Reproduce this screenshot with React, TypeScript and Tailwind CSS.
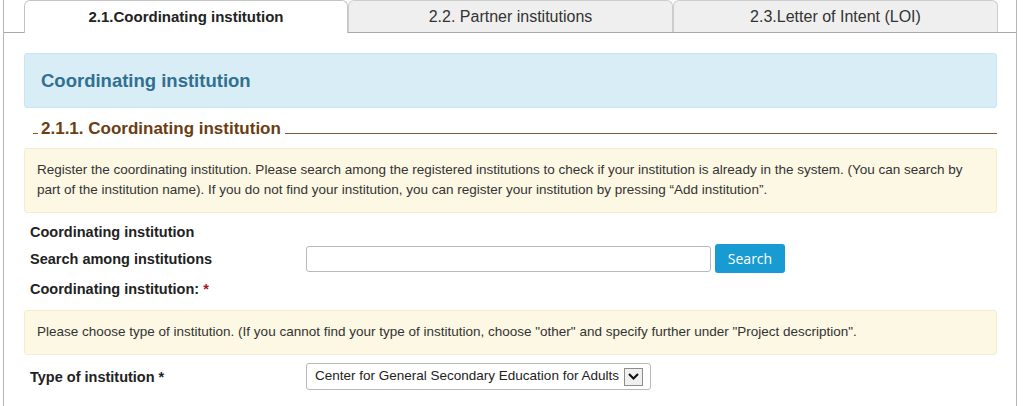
export default function App() {
  const tabs = ['2.1.Coordinating institution', '2.2. Partner institutions', '2.3.Letter of Intent (LOI)']

  return (
    <div className="h-[406px] w-[1024px] overflow-hidden bg-white font-['Liberation_Sans',Arial,sans-serif] text-[#333]">
      <div className="ml-[3px] h-[406px] w-[1014px] border-x border-[#b5b5b5]">
        {/* Tabs */}
        <div className="flex h-[33px] border-b border-[#a8a8a8] pl-[20px]">
          {tabs.map((t, i) => (
            <div
              key={t}
              className={
                i === 0
                  ? 'relative -mb-px flex h-[33px] w-[324px] items-center justify-center rounded-t-[6px] border border-b-0 border-[#c4c4c4] bg-white text-[15px] font-bold text-[#222]'
                  : 'flex h-[32px] w-[325px] items-center justify-center rounded-t-[6px] border border-b-0 border-[#cdcdcd] bg-[#efefef] text-[16px] text-[#333]'
              }
            >
              {t}
            </div>
          ))}
        </div>

        <div className="pl-[20px] pr-[19px] pt-[20px]">
          {/* Info heading */}
          <div className="flex h-[55px] items-center rounded-[3px] border border-[#c6e6f0] bg-[#d9edf7] pl-[16px] text-[18.5px] font-bold text-[#31708f]">
            Coordinating institution
          </div>

          {/* Legend */}
          <div className="mt-[10px] flex items-end gap-[3px] pl-[9px]">
            <span className="mb-[5px] h-px w-[5px] bg-[#7d5a38]" />
            <span className="text-[17px] font-bold leading-[21px] text-[#6b3d12]">2.1.1. Coordinating institution</span>
            <span className="mb-[5px] ml-[1px] h-px flex-1 bg-[#7d5a38]" />
          </div>

          <div className="mt-[9px] rounded-[3px] border border-[#f5ecd2] bg-[#fcf8e3] px-[12px] pb-[12px] pt-[11px] text-[13.5px] leading-[20px] text-[#333]">
            Register the coordinating institution. Please search among the registered institutions to check if your institution is already in the system. (You can search by part of the institution name). If you do not find your institution, you can register your institution by pressing “Add institution”.
          </div>

          <div className="pl-[6px] pt-[9px] text-[14.5px] font-bold text-[#222]">
            <div className="leading-[20px]">Coordinating institution</div>
            <div className="mt-[2px] flex items-center">
              <div className="w-[276px] leading-[20px]">Search among institutions</div>
              <input
                className="h-[26px] w-[405px] rounded-[3px] border border-[#b9b9b9] bg-white outline-none"
                type="text"
              />
              <button className="ml-[4px] h-[29px] w-[70px] rounded-[3px] bg-[#189bd3] font-['Open_Sans',sans-serif] text-[14px] font-normal text-white">
                Search
              </button>
            </div>
            <div className="mt-[6px] leading-[20px]">
              Coordinating institution: <span className="text-[#a51a1a]">*</span>
            </div>
          </div>

          <div className="mt-[11px] rounded-[3px] border border-[#f5ecd2] bg-[#fcf8e3] px-[12px] pb-[12px] pt-[11px] text-[13.5px] leading-[20px] text-[#333]">
            Please choose type of institution. (If you cannot find your type of institution, choose "other" and specify further under "Project description".
          </div>

          <div className="flex items-center pl-[6px] pt-[8px]">
            <div className="w-[276px] text-[14.5px] font-bold leading-[20px] text-[#222]">Type of institution *</div>
            <div className="flex h-[27px] w-[345px] items-center rounded-[3px] border border-[#b9b9b9] bg-white pl-[8px] pr-[7px] text-[13.5px] text-[#222]">
              <span className="flex-1 whitespace-nowrap">Center for General Secondary Education for Adults</span>
              <span className="flex h-[18px] w-[19px] items-center justify-center border border-[#8d8d8d] bg-[#f0f0f0]">
                <svg width="11" height="7" viewBox="0 0 11 7">
                  <path d="M1 1l4.5 4.5L10 1" stroke="#111" strokeWidth="2" fill="none" />
                </svg>
              </span>
            </div>
          </div>
        </div>
      </div>
    </div>
  )
}
